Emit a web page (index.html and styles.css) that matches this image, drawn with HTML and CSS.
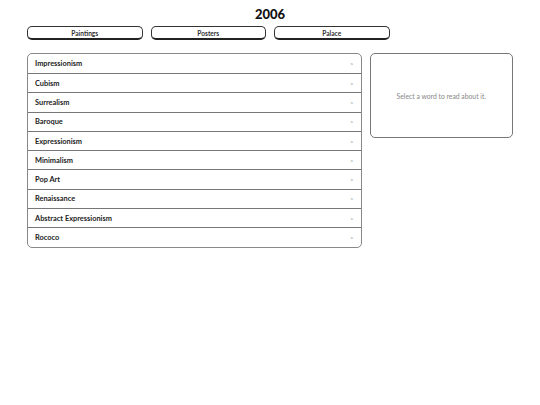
FILE: index.html
```html
<!DOCTYPE html>
<html>
<head>
<meta charset="utf-8">
<link rel="stylesheet" href="styles.css">
</head>
<body>
<div class="page">
  <h1 class="title">2006</h1>
  <div class="tabs">
    <button class="tab">Paintings</button>
    <button class="tab">Posters</button>
    <button class="tab">Palace</button>
  </div>
  <div class="main">
    <ul class="list">
      <li class="row"><span>Impressionism</span><span class="chev">&gt;</span></li>
      <li class="row"><span>Cubism</span><span class="chev">&gt;</span></li>
      <li class="row"><span>Surrealism</span><span class="chev">&gt;</span></li>
      <li class="row"><span>Baroque</span><span class="chev">&gt;</span></li>
      <li class="row"><span>Expressionism</span><span class="chev">&gt;</span></li>
      <li class="row"><span>Minimalism</span><span class="chev">&gt;</span></li>
      <li class="row"><span>Pop Art</span><span class="chev">&gt;</span></li>
      <li class="row"><span>Renaissance</span><span class="chev">&gt;</span></li>
      <li class="row"><span>Abstract Expressionism</span><span class="chev">&gt;</span></li>
      <li class="row"><span>Rococo</span><span class="chev">&gt;</span></li>
    </ul>
    <div class="detail">Select a word to read about it.</div>
  </div>
</div>
</body>
</html>
```
FILE: styles.css
```css
html, body {
  margin: 0;
  padding: 0;
  background: #fff;
}
body {
  font-family: "Lato", "Noto Sans", sans-serif;
  color: #222;
}
.page {
  width: 486px;
  margin: 0 auto;
  padding-top: 7px;
}
.title {
  margin: 0;
  text-align: center;
  font-size: 13px;
  line-height: 15px;
  font-weight: 900;
  color: #111;
}
.tabs {
  margin-top: 4px;
  display: grid;
  grid-template-columns: repeat(4, 1fr);
  gap: 8px;
}
.tab {
  height: 14px;
  padding: 0;
  background: #fff;
  border: 1px solid #333;
  border-bottom: 2px solid #222;
  border-radius: 5px;
  font-family: inherit;
  font-size: 6.6px;
  font-weight: 700;
  color: #333;
  line-height: 10px;
}
.main {
  margin-top: 13px;
  display: grid;
  grid-template-columns: 7fr 3fr;
  gap: 8px;
  align-items: start;
}
.list {
  margin: 0;
  padding: 0;
  list-style: none;
  border: 1px solid #888;
  border-radius: 5px;
}
.row {
  height: 18.3px;
  display: flex;
  align-items: center;
  justify-content: space-between;
  padding: 0 7px 0 7px;
  font-size: 7.4px;
  font-weight: 700;
  color: #222;
  border-top: 1px solid #777;
}
.row:first-child {
  border-top: none;
  height: 19px;
}
.chev {
  font-size: 6px;
  font-weight: 400;
  color: #999;
}
.detail {
  height: 83px;
  border: 1px solid #777;
  border-radius: 5px;
  display: flex;
  align-items: center;
  justify-content: center;
  font-size: 6.8px;
  color: #888;
}
```
